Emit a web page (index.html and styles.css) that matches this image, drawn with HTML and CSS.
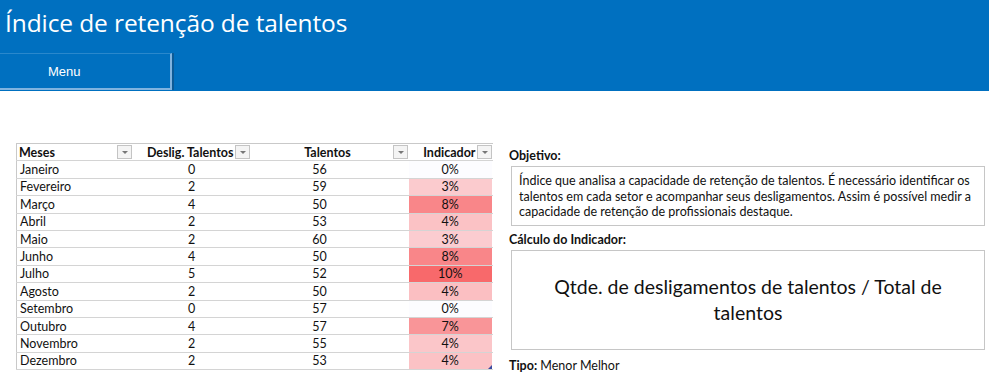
FILE: index.html
```html
<!DOCTYPE html>
<html lang="pt-BR">
<head>
    <meta charset="UTF-8">
    <title>Índice de retenção de talentos</title>
    <link rel="stylesheet" href="styles.css">
</head>

<body>
    <header class="header">
        <h1>Índice de retenção de talentos</h1>
        <button class="menu-btn">Menu</button>
    </header>

    <main class="content">
        <table class="data-table">
            <thead>
                <tr>
                    <th class="col-mes"><span class="th-label left">Meses</span><span class="filter"></span></th>
                    <th class="col-desl"><span class="th-label">Deslig. Talentos</span><span class="filter"></span></th>
                    <th class="col-tal"><span class="th-label">Talentos</span><span class="filter"></span></th>
                    <th class="col-ind"><span class="th-label">Indicador</span><span class="filter"></span></th>
                </tr>
            </thead>
            <tbody>
                <tr><td>Janeiro</td><td>0</td><td>56</td><td class="ind" style="background:#fcfcff">0%</td></tr>
                <tr><td>Fevereiro</td><td>2</td><td>59</td><td class="ind" style="background:#fbcbce">3%</td></tr>
                <tr><td>Março</td><td>4</td><td>50</td><td class="ind" style="background:#f98689">8%</td></tr>
                <tr><td>Abril</td><td>2</td><td>53</td><td class="ind" style="background:#fbc2c5">4%</td></tr>
                <tr><td>Maio</td><td>2</td><td>60</td><td class="ind" style="background:#fbccd0">3%</td></tr>
                <tr><td>Junho</td><td>4</td><td>50</td><td class="ind" style="background:#f98689">8%</td></tr>
                <tr><td>Julho</td><td>5</td><td>52</td><td class="ind" style="background:#f8696b">10%</td></tr>
                <tr><td>Agosto</td><td>2</td><td>50</td><td class="ind" style="background:#fbbfc2">4%</td></tr>
                <tr><td>Setembro</td><td>0</td><td>57</td><td class="ind" style="background:#fcfcff">0%</td></tr>
                <tr><td>Outubro</td><td>4</td><td>57</td><td class="ind" style="background:#f99598">7%</td></tr>
                <tr><td>Novembro</td><td>2</td><td>55</td><td class="ind" style="background:#fbc6c9">4%</td></tr>
                <tr><td>Dezembro</td><td>2</td><td>53</td><td class="ind last" style="background:#fbc2c5">4%</td></tr>
            </tbody>
        </table>

        <section class="info">
            <h3>Objetivo:</h3>
            <div class="info-box objective">
                Índice que analisa a capacidade de retenção de talentos. É necessário identificar os
                talentos em cada setor e acompanhar seus desligamentos. Assim é possível medir a
                capacidade de retenção de profissionais destaque.
            </div>

            <h3>Cálculo do Indicador:</h3>
            <div class="info-box formula">
                Qtde. de desligamentos de talentos / Total de talentos
            </div>

            <p class="type"><strong>Tipo:</strong> Menor Melhor</p>
        </section>
    </main>
</body>
</html>
```

FILE: styles.css
```css
* {
    box-sizing: border-box;
    margin: 0;
    padding: 0;
}

body {
    background: #fff;
    font-family: Lato, 'Open Sans', sans-serif;
    color: #111;
    width: 989px;
    height: 378px;
    overflow: hidden;
}

.header {
    background-color: #0070c0;
    height: 91px;
    display: flex;
    flex-direction: column;
    justify-content: space-between;
}

.header h1 {
    font-family: 'Open Sans', sans-serif;
    font-weight: 400;
    font-size: 24.5px;
    color: #fff;
    padding: 6px 0 0 5px;
    letter-spacing: -0.1px;
}

.menu-btn {
    width: 172px;
    height: 37px;
    background-color: #0070c0;
    color: #fff;
    border: none;
    border-top: 1px solid #2a88cc;
    border-right: 2px solid #7fb3e0;
    border-bottom: 2px solid #7fb3e0;
    box-shadow: 2px 0 0 #0b5a96;
    font-family: 'Liberation Sans', sans-serif;
    font-size: 13px;
    text-align: left;
    padding: 0 0 0 48px;
    margin-bottom: 1px;
}

.content {
    display: flex;
    align-items: flex-start;
    gap: 16px;
    padding: 52px 0 0 16px;
}

/* tabela */

.data-table {
    border-collapse: collapse;
    font-size: 12.5px;
    table-layout: fixed;
    width: 476px;
    border-left: 1px solid #c9c9c9;
    border-top: 1px solid #c9c9c9;
}

.data-table th,
.data-table td {
    height: 17.4px;
    padding: 0 2px;
    border-bottom: 1px solid #d4d4d4;
    white-space: nowrap;
    line-height: 15px;
}

.data-table th {
    font-weight: 700;
    text-align: right;
    position: relative;
    padding-right: 19px;
}

.data-table th.col-mes {
    text-align: left;
}

.col-mes { width: 116px; }
.col-desl { width: 118px; }
.col-tal { width: 158px; }
.col-ind { width: 84px; }

.data-table th.col-desl {
    padding-right: 17px;
}

.data-table th.col-tal {
    text-align: center;
    padding-right: 6px;
}

.data-table th.col-ind {
    padding-right: 17px;
}

.filter {
    position: absolute;
    right: 1px;
    top: 1px;
    width: 15px;
    height: 14px;
    border: 1px solid #c4c4c4;
    background: #f4f4f4;
}

.filter::after {
    content: '';
    position: absolute;
    left: 4px;
    top: 5px;
    border-left: 3px solid transparent;
    border-right: 3px solid transparent;
    border-top: 3px solid #777;
}

.data-table td {
    text-align: center;
}

.data-table td:first-child {
    text-align: left;
    padding-left: 3px;
}

.data-table td:nth-child(3) {
    padding-right: 22px;
}

.data-table td.ind {
    border-right: 1px solid #fff;
}

.last {
    position: relative;
}

.last::after {
    content: '';
    position: absolute;
    right: 0;
    bottom: 0;
    border-left: 4px solid transparent;
    border-bottom: 4px solid #3a4aa0;
}

/* painel direito */

.info {
    width: 478px;
    padding-top: 5px;
}

.info h3 {
    font-size: 12.5px;
    font-weight: 700;
    margin-bottom: 3px;
}

.info-box {
    border: 1px solid #c6c6c6;
    margin-left: 2px;
    width: 474px;
}

.objective {
    height: 60px;
    padding: 6px 6px 0 7px;
    font-size: 12.5px;
    line-height: 15.7px;
    margin-bottom: 6px;
}

.formula {
    height: 100px;
    display: flex;
    align-items: center;
    justify-content: center;
    text-align: center;
    font-size: 19.5px;
    line-height: 26px;
    padding: 0 36px;
    margin-bottom: 8px;
}

.type {
    font-size: 12.5px;
}
```
